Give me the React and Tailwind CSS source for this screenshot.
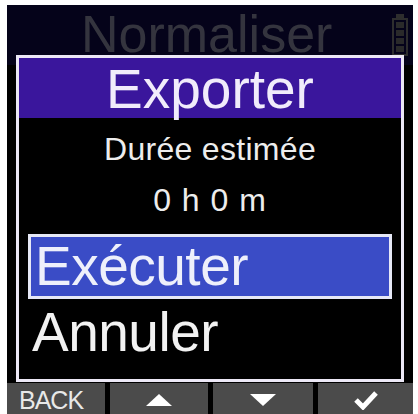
const font = { fontFamily: '"Liberation Sans", Arial, sans-serif' };

function Battery() {
  return (
    <div className="flex flex-col items-center w-[16px] mt-[9px]">
      <div className="w-[8px] h-[4px] bg-[#2e2e2e]" />
      <div className="w-[16px] h-[38px] border-2 border-[#2e2e2e] p-[2px] flex flex-col gap-[2px]">
        <div className="flex-1 bg-[#2a2a2a]" />
        <div className="flex-1 bg-[#2a2a2a]" />
        <div className="flex-1 bg-[#2a2a2a]" />
        <div className="flex-1 bg-[#2a2a2a]" />
      </div>
    </div>
  );
}

function BarButton({ children, className = '' }) {
  return (
    <div className={`h-full bg-[#4b4b4b] flex items-center justify-center ${className}`}>
      {children}
    </div>
  );
}

export default function App() {
  return (
    <div className="w-[418px] h-[414px] bg-white pt-[5px] pl-[7px] pr-[5px] overflow-hidden" style={font}>
      <div className="relative h-[409px] bg-black flex flex-col">
        {/* screen underneath the dialog */}
        <div className="h-[60px] bg-[#05031a] flex items-start justify-between pl-[74px] pr-[5px]">
          <span className="text-[52px] leading-[58px] text-[#34343e]">Normaliser</span>
          <Battery />
        </div>
        <div className="flex-1" />

        {/* bottom soft keys */}
        <div className="h-[31px] flex bg-black">
          <BarButton className="w-[98px] justify-start pl-[12px]">
            <span className="text-[25px] text-[#e8e8e8] tracking-[-1px] leading-none mt-[3px]">BACK</span>
          </BarButton>
          <div className="w-[5px]" />
          <BarButton className="w-[98px]">
            <svg width="28" height="14" viewBox="0 0 28 14" className="mt-[2px]">
              <polygon points="14,1 27,13 1,13" fill="#ffffff" />
            </svg>
          </BarButton>
          <div className="w-[5px]" />
          <BarButton className="w-[100px]">
            <svg width="28" height="14" viewBox="0 0 28 14" className="mt-[2px]">
              <polygon points="1,1 27,1 14,13" fill="#ffffff" />
            </svg>
          </BarButton>
          <div className="w-[5px]" />
          <BarButton className="flex-1">
            <svg width="26" height="20" viewBox="0 0 26 20" className="mt-[2px]">
              <path d="M3 10 L10 17 L23 3" stroke="#ffffff" strokeWidth="5" fill="none" strokeLinejoin="miter" />
            </svg>
          </BarButton>
        </div>

        {/* dialog */}
        <div className="absolute left-[9px] top-[50px] w-[388px] h-[327px] border-[3px] border-[#ece8f6] bg-black flex flex-col">
          <div className="h-[60px] bg-[#3a169c] flex items-center justify-center">
            <span className="text-[55px] leading-none text-[#f1ecfb] mt-[2px]">Exporter</span>
          </div>
          <div className="flex flex-col items-center pt-[10px]">
            <span className="text-[32px] leading-[42px] text-[#ededed] tracking-[0.3px]">Durée estimée</span>
            <span className="text-[32px] leading-[42px] text-[#ededed] tracking-[1px] mt-[9px]">0 h 0 m</span>
          </div>
          <div className="mx-[9px] mt-[13px] h-[65px] bg-[#3a4cc6] border-[3px] border-[#e6e8f6] flex items-center">
            <span className="text-[55px] leading-none text-[#eef0fb] ml-[4px] tracking-[-0.5px]">Exécuter</span>
          </div>
          <div className="flex items-center h-[66px] pl-[13px]">
            <span className="text-[55px] leading-none text-[#f2f2f2] tracking-[-0.5px]">Annuler</span>
          </div>
        </div>
      </div>
    </div>
  );
}
